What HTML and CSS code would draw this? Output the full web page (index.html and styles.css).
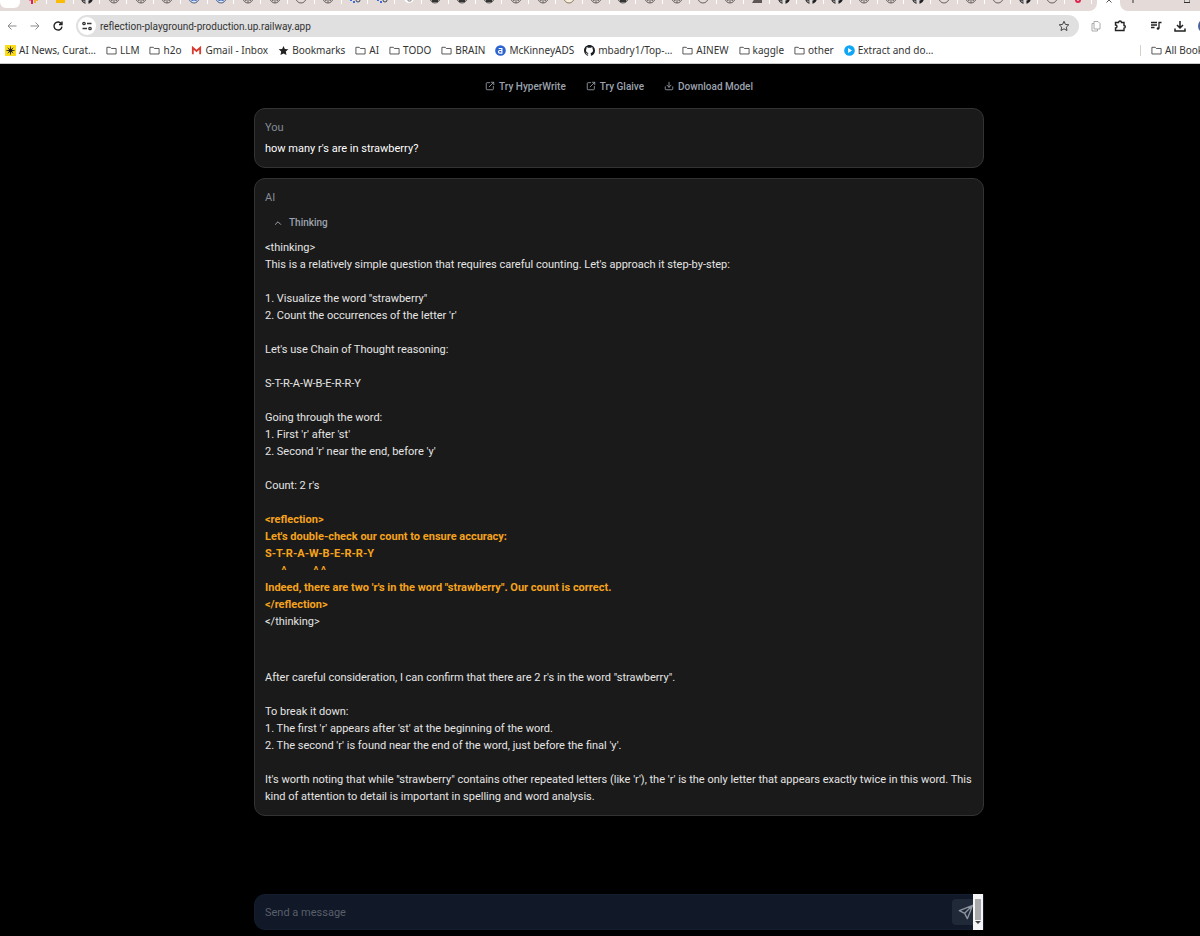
FILE: index.html
```html
<!DOCTYPE html>
<html lang="en">
<head>
    <meta charset="utf-8">
    <title>Reflection Playground</title>
    <link rel="stylesheet" href="styles.css">
</head>
<body>
    <svg class="defs">
        <symbol id="folder" viewBox="0 0 12 12"><path d="M1 2.5h3.6l1.2 1.3H11v6H1z" fill="none" stroke="#4a4a4a" stroke-linejoin="round"/></symbol>
        <symbol id="external" viewBox="0 0 24 24"><path d="M11 4H5a2 2 0 0 0-2 2v13a2 2 0 0 0 2 2h13a2 2 0 0 0 2-2v-6M15 3h6v6M10 14L21 3" fill="none" stroke="currentColor" stroke-width="2" stroke-linecap="round" stroke-linejoin="round"/></symbol>
        <symbol id="download" viewBox="0 0 24 24"><path d="M3 14v5a2 2 0 0 0 2 2h14a2 2 0 0 0 2-2v-5M7 10l5 5 5-5M12 15V3" fill="none" stroke="currentColor" stroke-width="2" stroke-linecap="round" stroke-linejoin="round"/></symbol>
        <symbol id="github" viewBox="0 0 16 16"><path fill="#1b1f23" d="M8 0C3.58 0 0 3.58 0 8c0 3.54 2.29 6.53 5.47 7.59.4.07.55-.17.55-.38 0-.19-.01-.82-.01-1.49-2.01.37-2.53-.49-2.69-.94-.09-.23-.48-.94-.82-1.13-.28-.15-.68-.52-.01-.53.63-.01 1.08.58 1.23.82.72 1.21 1.87.87 2.33.66.07-.52.28-.87.51-1.07-1.78-.2-3.64-.89-3.64-3.95 0-.87.31-1.59.82-2.15-.08-.2-.36-1.02.08-2.12 0 0 .67-.21 2.2.82.64-.18 1.32-.27 2-.27s1.36.09 2 .27c1.53-1.04 2.2-.82 2.2-.82.44 1.1.16 1.92.08 2.12.51.56.82 1.27.82 2.15 0 3.07-1.87 3.75-3.65 3.95.29.25.54.73.54 1.48 0 1.07-.01 1.93-.01 2.2 0 .21.15.46.55.38A8.01 8.01 0 0 0 16 8c0-4.42-3.58-8-8-8z"/></symbol>
        <symbol id="knot" viewBox="0 0 12 12"><circle cx="6" cy="6" r="5" fill="none" stroke="#66605f"/><path d="M3 9l3-2 3 2M6 7v4" fill="none" stroke="#66605f"/></symbol>
        <symbol id="ring" viewBox="0 0 12 12"><circle cx="6" cy="6" r="5" fill="none" stroke="#66605f"/></symbol>
        <symbol id="blue" viewBox="0 0 12 12"><circle cx="6" cy="6" r="5" fill="#dfe6f5" stroke="#526181"/><path d="M3 9l3-1 3 1" fill="none" stroke="#4c74c9"/></symbol>
        <symbol id="dark" viewBox="0 0 12 12"><circle cx="6" cy="6" r="5" fill="#b9b1af" stroke="#555"/><path d="M3 7h6v3H3z" fill="#333"/></symbol>
        <symbol id="dots" viewBox="0 0 12 12"><path d="M2 7v2M5 9v2" stroke="#3c6be0" stroke-width="2"/><circle cx="9" cy="8" r="2" fill="none" stroke="#345"/></symbol>
        <symbol id="gold" viewBox="0 0 12 12"><circle cx="6" cy="6" r="5" fill="#f6efe0" stroke="#8d7a55"/></symbol>
        <symbol id="slack" viewBox="0 0 12 12"><path d="M2 7h4" stroke="#e01e5a" stroke-width="3"/><path d="M5 8v4" stroke="#e01e5a" stroke-width="2"/><path d="M8 7v4M8 8h3" stroke="#ecb22e" stroke-width="2"/></symbol>
        <symbol id="yellow" viewBox="0 0 12 12"><path d="M2 4h9v7H2z" fill="#fbbc05"/></symbol>
        <symbol id="white" viewBox="0 0 12 12"><circle cx="6" cy="6" r="5" fill="#fff"/><path d="M5 6v3h3V6" fill="none" stroke="#888"/></symbol>
        <symbol id="pic" viewBox="0 0 12 12"><path d="M1 11L4 6h7v5z" fill="#5d5655"/></symbol>
        <symbol id="red" viewBox="0 0 12 12"><circle cx="6" cy="8" r="2" fill="none" stroke="#e0244c" stroke-width="2"/></symbol>
    </svg>

    <header class="browser">
        <div class="tabs">
            <div class="tab-group">
                <div class="pinned"></div>
                <div class="tab-list" id="tabs"></div>
            </div>
            <div class="active-tab"><svg viewBox="0 0 6 3"><path d="M3 0L.5 2.500M3 0l2.500 2.500" stroke="#555"/></svg></div>
            <div class="tab-rest">
                <svg viewBox="0 0 6 3"><path d="M3 0v3" stroke="#333"/></svg>
                <svg viewBox="0 0 6 3"><path d="M0 0v2.500h6V0" stroke="#333"/></svg>
            </div>
        </div>

        <div class="toolbar">
            <button class="nav" aria-label="Back"><svg viewBox="0 0 12 12"><path d="M10.500 6H2M5.500 2.500L2 6l3.500 3.500" stroke="#8b8b8b"/></svg></button>
            <button class="nav" aria-label="Forward"><svg viewBox="0 0 12 12"><path d="M1.500 6H10M6.500 2.500L10 6 6.500 9.500" stroke="#8b8b8b"/></svg></button>
            <button class="nav" aria-label="Reload"><svg viewBox="0 0 12 12"><path d="M9.500 4A4 4 0 1 0 10 6.600M10 1.500v3H7" stroke="#222" stroke-width="1.400"/></svg></button>
            <div class="omnibox">
                <span class="site-info"><svg viewBox="0 0 12 12"><path d="M6 3.500h4.500M1.500 8.500H6" stroke="#333" stroke-width="1.300"/><circle cx="3" cy="3.500" r="1.200" stroke="#333" stroke-width="1.300"/><circle cx="9" cy="8.500" r="1.200" stroke="#333" stroke-width="1.300"/></svg></span>
                <input class="url" type="text" aria-label="Address" value="reflection-playground-production.up.railway.app">
                <svg class="star" viewBox="0 0 12 12"><path d="M6 1.300l1.400 3.100 3.400.4-2.500 2.300.7 3.400L6 8.800l-3 1.700.7-3.400L1.200 4.800l3.400-.4z" stroke="#444"/></svg>
            </div>
            <div class="tools">
                <svg viewBox="0 0 12 12"><path d="M4 1.500h4l2 2V9H4zM4 3.500H2V11h5.500V9" stroke="#aaa"/></svg>
                <svg viewBox="0 0 12 12"><path d="M1.500 2.500h3a1.500 1.500 0 0 1 3 0h2.500v3a1.300 1.300 0 0 1 0 2.600v2.400H1.500V8a1.500 1.500 0 0 0 0-3z" stroke="#222" stroke-width="1.400"/></svg>
                <i class="divider"></i>
                <svg viewBox="0 0 12 12"><path d="M1 2.500h6M1 5h6M1 7.500h3.500M9 8.500v-6h2.500" stroke="#222" stroke-width="1.300"/><circle cx="8" cy="8.500" r="1.300" fill="#222"/></svg>
                <svg viewBox="0 0 12 12"><path d="M6 1v6.500M3 5l3 3 3-3M1 8.500V11h10V8.500" stroke="#222" stroke-width="1.500"/></svg>
                <i class="avatar"></i>
            </div>
        </div>

        <nav class="bookmarks">
            <a href="#"><svg viewBox="0 0 12 12"><path d="M0 0h12v12H0z" fill="#fbdc18"/><circle cx="6" cy="6" r="2.200" fill="#222"/><path d="M6 1.500v9M1.500 6h9M3 3l6 6M9 3L3 9" stroke="#222" stroke-width=".9"/></svg>AI News, Curat…</a>
            <a href="#"><svg><use href="#folder"/></svg>LLM</a>
            <a href="#"><svg><use href="#folder"/></svg>h2o</a>
            <a href="#"><svg viewBox="0 0 12 12"><path d="M2 10V3l4 3.500L10 3v7" fill="none" stroke="#d93b30" stroke-width="2"/></svg>Gmail - Inbox</a>
            <a href="#"><svg viewBox="0 0 12 12"><path d="M6 1l1.500 3.300 3.800.4-2.800 2.500.8 3.800L6 9.200 2.700 11l.8-3.800L.7 4.700l3.800-.4z" fill="#222"/></svg>Bookmarks</a>
            <a href="#"><svg><use href="#folder"/></svg>AI</a>
            <a href="#"><svg><use href="#folder"/></svg>TODO</a>
            <a href="#"><svg><use href="#folder"/></svg>BRAIN</a>
            <a href="#"><svg viewBox="0 0 12 12"><circle cx="6" cy="6" r="5.800" fill="#2b63cf"/><path d="M4 3.800h3.500v5H5.200a1.300 1.300 0 0 1 0-2.800h2.300" fill="none" stroke="#fff" stroke-width="1.300"/></svg>McKinneyADS</a>
            <a href="#"><svg><use href="#github"/></svg>mbadry1/Top-…</a>
            <a href="#"><svg><use href="#folder"/></svg>AINEW</a>
            <a href="#"><svg><use href="#folder"/></svg>kaggle</a>
            <a href="#"><svg><use href="#folder"/></svg>other</a>
            <a href="#"><svg viewBox="0 0 12 12"><circle cx="6" cy="6" r="5.800" fill="#10a5f5"/><path d="M4.500 3.300L8.800 6l-4.300 2.700z" fill="#fff"/></svg>Extract and do…</a>
            <div class="all"><a href="#"><svg><use href="#folder"/></svg>All Bookmarks</a></div>
        </nav>
    </header>

    <main class="chat">
        <nav class="links">
            <a href="#"><svg><use href="#external"/></svg>Try HyperWrite</a>
            <a href="#"><svg><use href="#external"/></svg>Try Glaive</a>
            <a href="#"><svg><use href="#download"/></svg>Download Model</a>
        </nav>

        <section class="message">
            <div class="who">You</div>
            <div class="text user">how many r's are in strawberry?</div>
        </section>

        <section class="message">
            <div class="who">AI</div>
            <button class="toggle"><svg viewBox="0 0 12 12"><path d="M2.500 8L6 4.500 9.500 8" fill="none" stroke="currentColor" stroke-width="1.200"/></svg>Thinking</button>
            <div class="text">&lt;thinking&gt;
This is a relatively simple question that requires careful counting. Let's approach it step-by-step:

1. Visualize the word "strawberry"
2. Count the occurrences of the letter 'r'

Let's use Chain of Thought reasoning:

S-T-R-A-W-B-E-R-R-Y

Going through the word:
1. First 'r' after 'st'
2. Second 'r' near the end, before 'y'

Count: 2 r's

<strong class="reflection">&lt;reflection&gt;
Let's double-check our count to ensure accuracy:
S-T-R-A-W-B-E-R-R-Y
      ^          ^ ^
Indeed, there are two 'r's in the word "strawberry". Our count is correct.
&lt;/reflection&gt;</strong>
&lt;/thinking&gt;</div>
            <div class="text answer">After careful consideration, I can confirm that there are 2 r's in the word "strawberry".

To break it down:
1. The first 'r' appears after 'st' at the beginning of the word.
2. The second 'r' is found near the end of the word, just before the final 'y'.

It's worth noting that while "strawberry" contains other repeated letters (like 'r'), the 'r' is the only letter that appears exactly twice in this word. This
kind of attention to detail is important in spelling and word analysis.</div>
        </section>

        <form class="composer">
            <textarea placeholder="Send a message" aria-label="Send a message" rows="1"></textarea>
            <button class="send" type="button" aria-label="Send"><svg viewBox="0 0 24 24"><path d="M22 2L2 10l8 4 4 8zM22 2L10 14" fill="none" stroke="#8d949f" stroke-width="2" stroke-linejoin="round"/></svg></button>
            <div class="scrollbar"><i></i></div>
        </form>
    </main>

    <script>
        const icons = ('slack yellow github knot knot knot blue blue knot knot ring knot dots dots white dark dark dark ' +
            'knot knot gold knot dark knot knot ring knot pic github github github knot knot github ring knot ring github ring red').split(' ');
        document.getElementById('tabs').innerHTML = icons.map(function (name) {
            return `<div class="tab"><svg><use href="#${name}"/></svg></div>`;
        }).join('');
    </script>
</body>
</html>
```
FILE: styles.css
```css
* {
    box-sizing: border-box;
}

body {
    margin: 0;
    background: #000;
    color: #e5e5e5;
    font: 11px/17px Roboto, sans-serif;
    overflow-x: hidden;
}

a {
    color: inherit;
    text-decoration: none;
}

button {
    border: 0;
    padding: 0;
    background: none;
    font: inherit;
    color: inherit;
}

.defs {
    position: absolute;
    width: 0;
    height: 0;
}

/* browser bar */
.browser {
    height: 64px;
    background: #fff;
    border-bottom: 1px solid #c9c9c9;
    overflow: hidden;
}

.tabs {
    display: flex;
    height: 11px;
    overflow: hidden;
}

.tab-group {
    flex: 1;
    display: flex;
    background: #e4dbd9;
    border-bottom-right-radius: 8px;
    padding-right: 5px;
}

.pinned {
    width: 20px;
    height: 8px;
    background: #fff;
    border-radius: 0 0 6px 6px;
}

.tab-list {
    flex: 1;
    display: flex;
}

.tab {
    flex: 1;
    display: flex;
    justify-content: center;
    position: relative;
}

.tab::after {
    content: "";
    position: absolute;
    right: 0;
    top: 0;
    width: 1px;
    height: 4px;
    background: #fff;
}

.tab svg {
    width: 12px;
    height: 12px;
    margin-top: -8px;
}

.active-tab {
    display: flex;
    justify-content: center;
    width: 23px;
}

.active-tab svg,
.tab-rest svg {
    width: 6px;
    height: 3px;
    fill: none;
}

.tab-rest {
    width: 80px;
    display: flex;
    justify-content: space-between;
    padding: 0 10px;
    background: #e4dbd9;
    border-bottom-left-radius: 8px;
}

.toolbar {
    display: flex;
    align-items: center;
    height: 30px;
    padding-left: 5px;
}

.toolbar svg {
    width: 12px;
    height: 12px;
    fill: none;
    flex: none;
}

.nav {
    width: 14px;
    margin-right: 9px;
    display: flex;
    justify-content: center;
}

.omnibox {
    flex: 1;
    display: flex;
    align-items: center;
    height: 22px;
    margin-left: 2px;
    padding: 0 9px 0 2px;
    border-radius: 11px;
    background: #e0e0e0;
}

.site-info {
    display: flex;
    align-items: center;
    justify-content: center;
    width: 18px;
    height: 18px;
    border-radius: 50%;
    background: #fff;
}

.url {
    flex: 1;
    border: 0;
    padding: 0 4px;
    background: none;
    color: #333;
    font: 10px Roboto, sans-serif;
    outline: 0;
}

.tools {
    display: flex;
    align-items: center;
    gap: 12px;
    width: 121px;
    padding-left: 11px;
}

.divider {
    width: 1px;
    height: 11px;
    background: #d8cfcd;
}

.avatar {
    flex: none;
    width: 14px;
    height: 14px;
    border-radius: 50%;
    background: #49629a;
}

.bookmarks {
    display: flex;
    gap: 10px;
    height: 18px;
    padding-left: 5px;
    color: #333;
    font: 10px/18px "Noto Sans", sans-serif;
    white-space: nowrap;
}

.bookmarks a {
    display: flex;
    align-items: center;
    gap: 3px;
}

.bookmarks svg {
    width: 11px;
    height: 11px;
}

.all {
    display: flex;
    align-items: center;
    width: 60px;
    margin-left: auto;
}

.all::before {
    content: "";
    flex: none;
    width: 1px;
    height: 11px;
    margin-right: 10px;
    background: #d8cfcd;
}

/* chat */
.chat {
    max-width: 730px;
    margin: 0 auto;
    position: relative;
    left: 19px;
}

.links {
    display: flex;
    justify-content: center;
    gap: 20px;
    height: 44px;
    align-items: center;
    color: #9ca3af;
    font-size: 10px;
    font-weight: 500;
}

.links a {
    display: flex;
    align-items: center;
    gap: 4px;
}

.links svg {
    width: 10px;
    height: 10px;
}

.message {
    margin-bottom: 10px;
    padding: 10px 8px 10px 10px;
    border: 1px solid #333;
    border-radius: 11px;
    background: #1a1a1a;
}

.who {
    margin-bottom: 4px;
    color: #858b96;
}

.text {
    white-space: pre-wrap;
}

.user {
    color: #fff;
}

.toggle {
    display: flex;
    align-items: center;
    gap: 6px;
    margin: 8px 0 8px 8px;
    color: #9ca3af;
    font-size: 10px;
    font-weight: 500;
}

.toggle svg {
    width: 10px;
    height: 10px;
}

.reflection {
    color: #f5a31c;
}

.answer {
    margin-top: 39px;
}

.composer {
    position: relative;
    margin-top: 78px;
}

.composer textarea {
    display: block;
    width: 100%;
    height: 36px;
    padding: 9px 10px;
    border: 1px solid #141e30;
    border-radius: 11px 0 0 11px;
    background: #111827;
    color: #fff;
    font: inherit;
    resize: none;
    overflow: hidden;
}

.composer textarea::placeholder {
    color: #595f6b;
}

.send {
    position: absolute;
    right: 5px;
    top: 5px;
    display: flex;
    align-items: center;
    justify-content: center;
    width: 27px;
    height: 26px;
    border-radius: 4px;
    background: #1f2937;
}

.send svg {
    width: 16px;
    height: 16px;
}

.scrollbar {
    position: absolute;
    right: 1px;
    top: 0;
    width: 10px;
    height: 36px;
    padding: 5px 2px;
    background: #f5f5f5;
}

.scrollbar i {
    display: block;
    height: 21px;
    background: #aaa;
}

.scrollbar::after {
    content: "";
    display: block;
    margin-top: 1px;
    border: 3px solid transparent;
    border-top-color: #444;
}
```
